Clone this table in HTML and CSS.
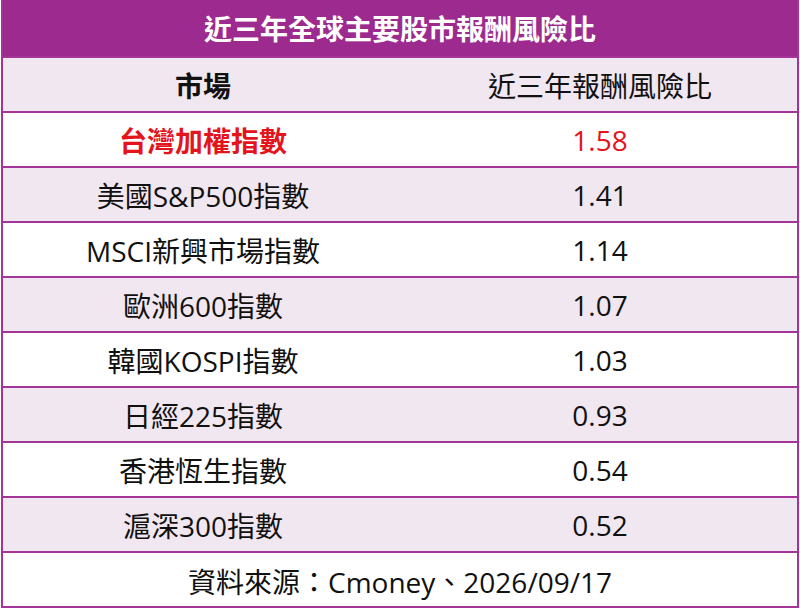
FILE: index.html
```html
<!DOCTYPE html>
<html lang="zh-Hant">
<head>
<meta charset="utf-8">
<title>近三年全球主要股市報酬風險比</title>
<link rel="stylesheet" href="styles.css">
</head>
<body>
<div class="table">
  <div class="title">近三年全球主要股市報酬風險比</div>
  <div class="row light head">
    <div class="cell left bold">市場</div>
    <div class="cell right">近三年報酬風險比</div>
  </div>
  <div class="row white red">
    <div class="cell left bold">台灣加權指數</div>
    <div class="cell right">1.58</div>
  </div>
  <div class="row light">
    <div class="cell left">美國S&amp;P500指數</div>
    <div class="cell right">1.41</div>
  </div>
  <div class="row white">
    <div class="cell left">MSCI新興市場指數</div>
    <div class="cell right">1.14</div>
  </div>
  <div class="row light">
    <div class="cell left">歐洲600指數</div>
    <div class="cell right">1.07</div>
  </div>
  <div class="row white">
    <div class="cell left">韓國KOSPI指數</div>
    <div class="cell right">1.03</div>
  </div>
  <div class="row light">
    <div class="cell left">日經225指數</div>
    <div class="cell right">0.93</div>
  </div>
  <div class="row white">
    <div class="cell left">香港恆生指數</div>
    <div class="cell right">0.54</div>
  </div>
  <div class="row light">
    <div class="cell left">滬深300指數</div>
    <div class="cell right">0.52</div>
  </div>
  <div class="row white source">
    <div class="cell full">資料來源：Cmoney、2026/09/17</div>
  </div>
</div>
</body>
</html>
```
FILE: styles.css
```css
html, body {
  margin: 0;
  padding: 0;
  background: #ffffff;
}
body {
  font-family: "Open Sans", "Noto Sans CJK TC", sans-serif;
  color: #111111;
}
.table {
  box-sizing: border-box;
  width: 798px;
  margin-left: 1px;
  border-left: 2px solid #a33598;
  border-right: 2px solid #a33598;
  border-bottom: 2px solid #a33598;
}
.title {
  height: 56px;
  background: #9d2a8e;
  color: #ffffff;
  font-size: 28px;
  font-weight: 700;
  display: flex;
  align-items: center;
  justify-content: center;
  letter-spacing: 0;
}
.row {
  display: grid;
  grid-template-columns: 400px 1fr;
  height: 53px;
  border-top: 2px solid #a33598;
  font-size: 28px;
}
.row.light {
  background: #f1e7f0;
}
.row.white {
  background: #ffffff;
}
.cell {
  display: flex;
  align-items: center;
  justify-content: center;
  white-space: nowrap;
}
.bold {
  font-weight: 700;
}
.red {
  color: #e3141c;
}
.source {
  grid-template-columns: 1fr;
}
.full {
  padding-top: 2px;
}
```
